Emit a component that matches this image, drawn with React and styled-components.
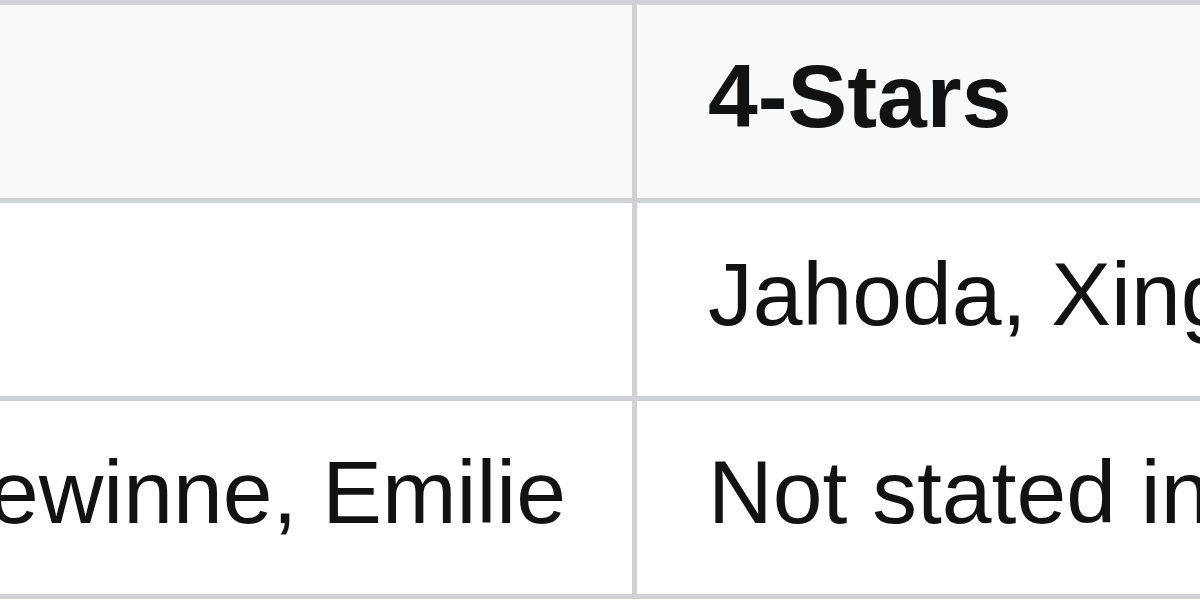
import React from "react";
import styled, { createGlobalStyle } from "styled-components";

const Global = createGlobalStyle`
  html, body {
    margin: 0;
    padding: 0;
    background: #ffffff;
  }
  body {
    width: 1200px;
    height: 600px;
    overflow: hidden;
    font-family: "Liberation Sans", Arial, sans-serif;
    color: #121212;
  }
`;

const Table = styled.table`
  border-collapse: separate;
  border-spacing: 0;
  font-size: 89.5px;
  line-height: 104px;
  white-space: nowrap;
`;

const Row = styled.tr`
  background: ${(p) => (p.head ? "#f8f9fa" : "#ffffff")};
`;

const Cell = styled.td`
  box-sizing: border-box;
  padding: 39px 71px 50px;
  border-bottom: 5px solid #cfd1d4;
  border-top: ${(p) => (p.first ? "5px solid #cfd1d4" : "none")};
  border-right: ${(p) => (p.name ? "5px solid #cfd1d4" : "none")};
  font-weight: ${(p) => (p.head ? 700 : 400)};
  text-align: ${(p) => (p.name ? "right" : "left")};
  vertical-align: middle;
  ${(p) =>
    p.name
      ? `
    width: 637px;
    max-width: 637px;
    overflow: hidden;
    direction: rtl;
  `
      : `
    width: 1000px;
  `}
`;

const rows = [
  { name: "", value: "4-Stars", head: true },
  { name: "", value: "Jahoda, Xingqiu" },
  { name: "Dewinne, Emilie", value: "Not stated in source" },
];

export default function App() {
  return (
    <>
      <Global />
      <Table>
        <tbody>
          {rows.map((r, i) => (
            <Row key={i} head={r.head}>
              <Cell name first={i === 0} head={r.head}>
                <span dir="ltr">{r.name}</span>
              </Cell>
              <Cell first={i === 0} head={r.head}>
                {r.value}
              </Cell>
            </Row>
          ))}
        </tbody>
      </Table>
    </>
  );
}
